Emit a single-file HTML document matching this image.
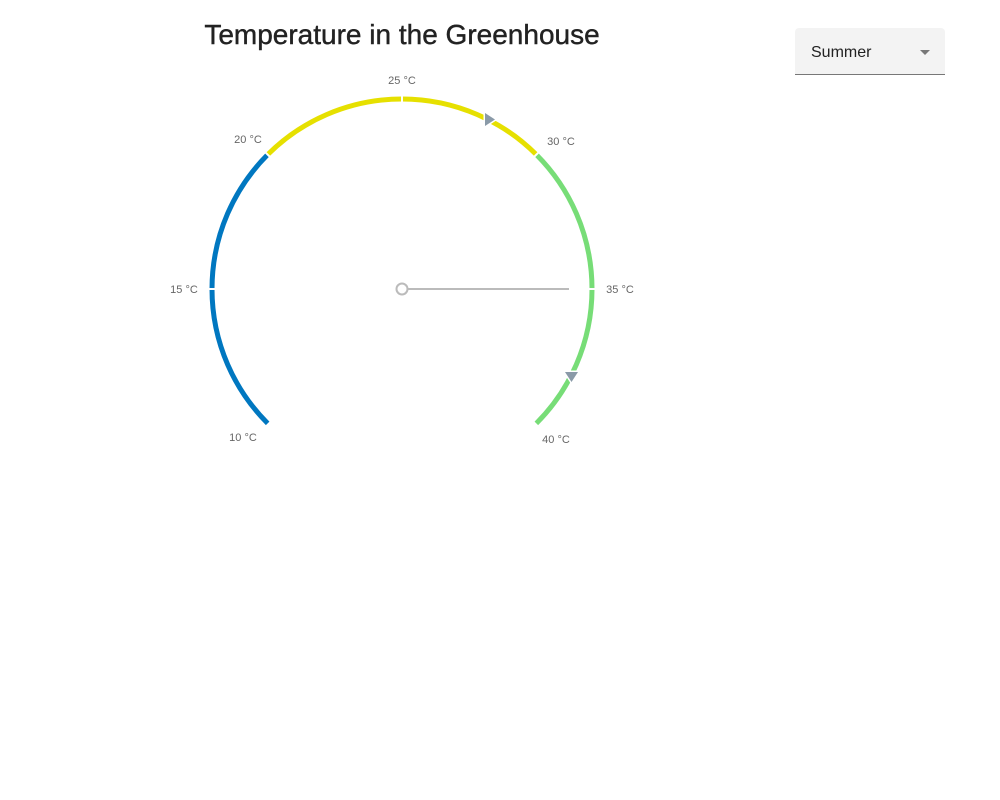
<!DOCTYPE html>
<html><head><style>
body{margin:0;width:1000px;height:800px;background:#fff;font-family:"Liberation Sans",sans-serif;position:relative;overflow:hidden}
.title{position:absolute;left:0;width:804px;top:19px;text-align:center;font-size:28px;color:#222;-webkit-text-stroke:0.4px #222}
.dd{position:absolute;left:795px;top:28px;width:150px;height:46px;background:#f3f3f3;border-bottom:1px solid #777;border-radius:4px 4px 0 0}
.dd span{position:absolute;left:16px;top:16px;font-size:16px;color:#222}
.dd i{position:absolute;left:125px;top:22px;width:0;height:0;border-left:5px solid transparent;border-right:5px solid transparent;border-top:5px solid #777}
svg{position:absolute;left:0;top:0}
text{font-family:"Liberation Sans",sans-serif;font-size:11px;fill:#666}
</style></head><body>
<div class="title">Temperature in the Greenhouse</div>
<div class="dd"><span>Summer</span><i></i></div>
<svg width="1000" height="800">
<g fill="none" stroke-width="5">
<path d="M267.65 423.35 A190 190 0 0 1 267.65 154.65" stroke="#0077c0"/>
<path d="M267.65 154.65 A190 190 0 0 1 536.35 154.65" stroke="#e6e000"/>
<path d="M536.35 154.65 A190 190 0 0 1 536.35 423.35" stroke="#77dd77"/>
</g>
<g stroke="#fff" stroke-width="2">
<line x1="205" y1="289" x2="219" y2="289"/>
<line x1="402" y1="92" x2="402" y2="106"/>
<line x1="585" y1="289" x2="599" y2="289"/>
<line x1="262.7" y1="149.7" x2="272.6" y2="159.6"/>
<line x1="531.4" y1="159.6" x2="541.3" y2="149.7"/>
</g>
<polygon points="485,113 485,126 495,119.5" fill="#8a9aa8" stroke="#fff" stroke-width="3" paint-order="stroke"/>
<polygon points="565,372 578,372 571.5,382" fill="#8a9aa8" stroke="#fff" stroke-width="3" paint-order="stroke"/>
<line x1="407" y1="289" x2="569" y2="289" stroke="#bbb" stroke-width="2"/>
<circle cx="402" cy="289" r="5.5" fill="#fff" stroke="#bbb" stroke-width="2"/>
<g text-anchor="middle">
<text x="402" y="84">25 °C</text>
<text x="248" y="143">20 °C</text>
<text x="561" y="145">30 °C</text>
<text x="184" y="293">15 °C</text>
<text x="620" y="293">35 °C</text>
<text x="243" y="441">10 °C</text>
<text x="556" y="443">40 °C</text>
</g>
</svg>
</body></html>
